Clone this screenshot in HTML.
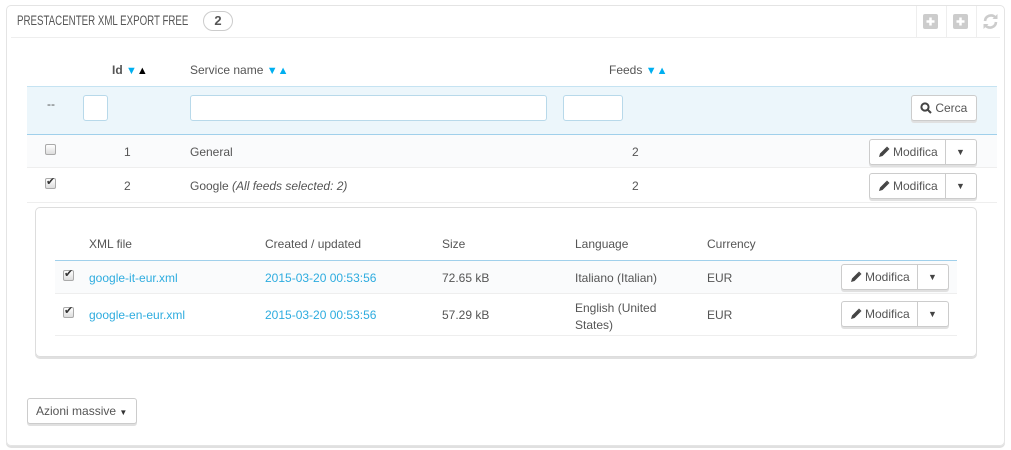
<!DOCTYPE html>
<html><head><meta charset="utf-8"><style>
*{box-sizing:border-box;margin:0;padding:0}
body{width:1011px;height:450px;background:#fff;font-family:"Liberation Sans",sans-serif;font-size:12px;color:#555;position:relative;overflow:hidden}
.a{position:absolute}
.panel{left:6px;top:5px;width:999px;height:441px;border:1px solid #e4e4e4;border-radius:5px;box-shadow:0 2px 0 #e0e0e0}
.t{position:absolute;white-space:nowrap;line-height:14px}
.btn{position:absolute;border:1px solid #ccc;border-radius:3px;background:#fff;box-shadow:0 2px 0 #e0e0e0;height:26px}
.inp{position:absolute;border:1px solid #b8d9ea;border-radius:3px;background:#fff;height:26px}
.cb{position:absolute;width:11px;height:11px;border:1px solid #aaa;border-radius:2px;background:linear-gradient(#fff,#ddd)}
.lnk{color:#2eacdf}
.sort{font-size:11px;color:#00aff0}
</style></head><body>
<div class="a panel"></div>
<div class="t" style="left:17px;top:14px;font-size:13.5px;color:#555;transform:scaleX(.72);transform-origin:left">PRESTACENTER XML EXPORT FREE</div>
<div class="a" style="left:203px;top:11px;width:30px;height:20px;border:1px solid #ccc;border-radius:10px;text-align:center;font-weight:bold;font-size:13px;line-height:18px;color:#555">2</div>
<div class="a" style="left:11px;top:37px;width:989px;height:1px;background:#eee"></div>
<div class="a" style="left:916px;top:6px;width:1px;height:31px;background:#eee"></div>
<div class="a" style="left:946px;top:6px;width:1px;height:31px;background:#eee"></div>
<div class="a" style="left:976px;top:6px;width:1px;height:31px;background:#eee"></div>
<svg class="a" style="left:923px;top:14px" width="15" height="15"><rect width="15" height="15" rx="2" fill="#ccc"/><path d="M7.5 3.5v8M3.5 7.5h8" stroke="#fff" stroke-width="2.5"/></svg>
<svg class="a" style="left:953px;top:14px" width="15" height="15"><rect width="15" height="15" rx="2" fill="#ccc"/><path d="M7.5 3.5v8M3.5 7.5h8" stroke="#fff" stroke-width="2.5"/></svg>
<svg class="a" style="left:982px;top:13px" width="17" height="17" fill="none" stroke="#ccc" stroke-width="2.6"><path d="M3 8a6 6 0 0 1 10.5-3.5"/><path d="M14 9a6 6 0 0 1-10.5 3.5"/><path d="M15.5 1v5h-5z" fill="#ccc" stroke="none"/><path d="M1.5 16v-5h5z" fill="#ccc" stroke="none"/></svg>

<div class="t" style="left:112px;top:63px;font-weight:bold;color:#555">Id <span class="sort">▼</span><span style="font-size:11px;color:#000">▲</span></div>
<div class="t" style="left:190px;top:63px">Service name <span class="sort">▼▲</span></div>
<div class="t" style="left:609px;top:63px">Feeds <span class="sort">▼▲</span></div>

<div class="a" style="left:27px;top:86px;width:970px;height:49px;background:#ecf6fb;border-top:1px solid #c5e3f2;border-bottom:1px solid #a0d0eb"></div>
<div class="t" style="left:47px;top:97px">--</div>
<div class="inp" style="left:83px;top:95px;width:25px"></div>
<div class="inp" style="left:190px;top:95px;width:357px"></div>
<div class="inp" style="left:563px;top:95px;width:60px"></div>
<div class="btn" style="left:911px;top:95px;width:66px;padding:5px 0 0 8px"><svg width="12" height="12" style="vertical-align:-2px" fill="none" stroke="#444" stroke-width="2"><circle cx="5" cy="5" r="3.6"/><path d="M7.5 7.5l3.5 3.5"/></svg> Cerca</div>

<div class="a" style="left:27px;top:135px;width:970px;height:33px;background:#fafbfc;border-bottom:1px solid #eee"></div>
<div class="cb" style="left:45px;top:144px"></div>
<div class="t" style="left:124px;top:145px">1</div>
<div class="t" style="left:190px;top:145px">General</div>
<div class="t" style="left:632px;top:145px">2</div>
<div class="a" style="left:27px;top:202px;width:970px;height:1px;background:#eee"></div>
<div class="cb" style="left:45px;top:178px"></div><div class="t" style="left:46px;top:175px;font-size:11px;color:#333">✔</div>
<div class="t" style="left:124px;top:179px">2</div>
<div class="t" style="left:190px;top:179px">Google <i>(All feeds selected: 2)</i></div>
<div class="t" style="left:632px;top:179px">2</div>

<div class="btn" style="left:869px;top:139px;width:108px"><svg class="a" style="left:8px;top:6px" width="12" height="12"><path d="M1 11l1-3.5 6-6 2.5 2.5-6 6z" fill="#444"/><path d="M9 0.5l2.5 2.5-1 1-2.5-2.5z" fill="#444"/></svg><span class="t" style="left:23px;top:5px">Modifica</span><span class="a" style="left:75px;top:0;width:1px;height:24px;background:#ccc"></span><span class="t" style="left:86px;top:5px;font-size:9px;color:#444">▼</span></div>
<div class="btn" style="left:869px;top:173px;width:108px"><svg class="a" style="left:8px;top:6px" width="12" height="12"><path d="M1 11l1-3.5 6-6 2.5 2.5-6 6z" fill="#444"/><path d="M9 0.5l2.5 2.5-1 1-2.5-2.5z" fill="#444"/></svg><span class="t" style="left:23px;top:5px">Modifica</span><span class="a" style="left:75px;top:0;width:1px;height:24px;background:#ccc"></span><span class="t" style="left:86px;top:5px;font-size:9px;color:#444">▼</span></div>

<div class="a" style="left:35px;top:207px;width:942px;height:150px;border:1px solid #ddd;border-radius:5px;box-shadow:0 2px 0 #e0e0e0"></div>
<div class="t" style="left:89px;top:237px">XML file</div>
<div class="t" style="left:265px;top:237px">Created / updated</div>
<div class="t" style="left:442px;top:237px">Size</div>
<div class="t" style="left:575px;top:237px">Language</div>
<div class="t" style="left:707px;top:237px">Currency</div>
<div class="a" style="left:55px;top:260px;width:902px;height:34px;background:#fafbfc;border-top:1px solid #a0d0eb;border-bottom:1px solid #eee"></div>
<div class="a" style="left:55px;top:335px;width:902px;height:1px;background:#eee"></div>
<div class="cb" style="left:63px;top:270px"></div><div class="t" style="left:64px;top:267px;font-size:11px;color:#333">✔</div>
<div class="cb" style="left:63px;top:307px"></div><div class="t" style="left:64px;top:304px;font-size:11px;color:#333">✔</div>
<div class="t lnk" style="left:89px;top:271px">google-it-eur.xml</div>
<div class="t lnk" style="left:265px;top:271px">2015-03-20 00:53:56</div>
<div class="t" style="left:442px;top:271px">72.65 kB</div>
<div class="t" style="left:575px;top:271px">Italiano (Italian)</div>
<div class="t" style="left:707px;top:271px">EUR</div>
<div class="t lnk" style="left:89px;top:308px">google-en-eur.xml</div>
<div class="t lnk" style="left:265px;top:308px">2015-03-20 00:53:56</div>
<div class="t" style="left:442px;top:308px">57.29 kB</div>
<div class="t" style="left:575px;top:300px;line-height:17px">English (United<br>States)</div>
<div class="t" style="left:707px;top:308px">EUR</div>
<div class="btn" style="left:841px;top:264px;width:108px"><svg class="a" style="left:8px;top:6px" width="12" height="12"><path d="M1 11l1-3.5 6-6 2.5 2.5-6 6z" fill="#444"/><path d="M9 0.5l2.5 2.5-1 1-2.5-2.5z" fill="#444"/></svg><span class="t" style="left:23px;top:5px">Modifica</span><span class="a" style="left:75px;top:0;width:1px;height:24px;background:#ccc"></span><span class="t" style="left:86px;top:5px;font-size:9px;color:#444">▼</span></div>
<div class="btn" style="left:841px;top:301px;width:108px"><svg class="a" style="left:8px;top:6px" width="12" height="12"><path d="M1 11l1-3.5 6-6 2.5 2.5-6 6z" fill="#444"/><path d="M9 0.5l2.5 2.5-1 1-2.5-2.5z" fill="#444"/></svg><span class="t" style="left:23px;top:5px">Modifica</span><span class="a" style="left:75px;top:0;width:1px;height:24px;background:#ccc"></span><span class="t" style="left:86px;top:5px;font-size:9px;color:#444">▼</span></div>

<div class="btn" style="left:27px;top:398px;width:110px;height:26px"><span class="t" style="left:8px;top:5px">Azioni massive <span style="font-size:8px;color:#333">▼</span></span></div>
</body></html>
